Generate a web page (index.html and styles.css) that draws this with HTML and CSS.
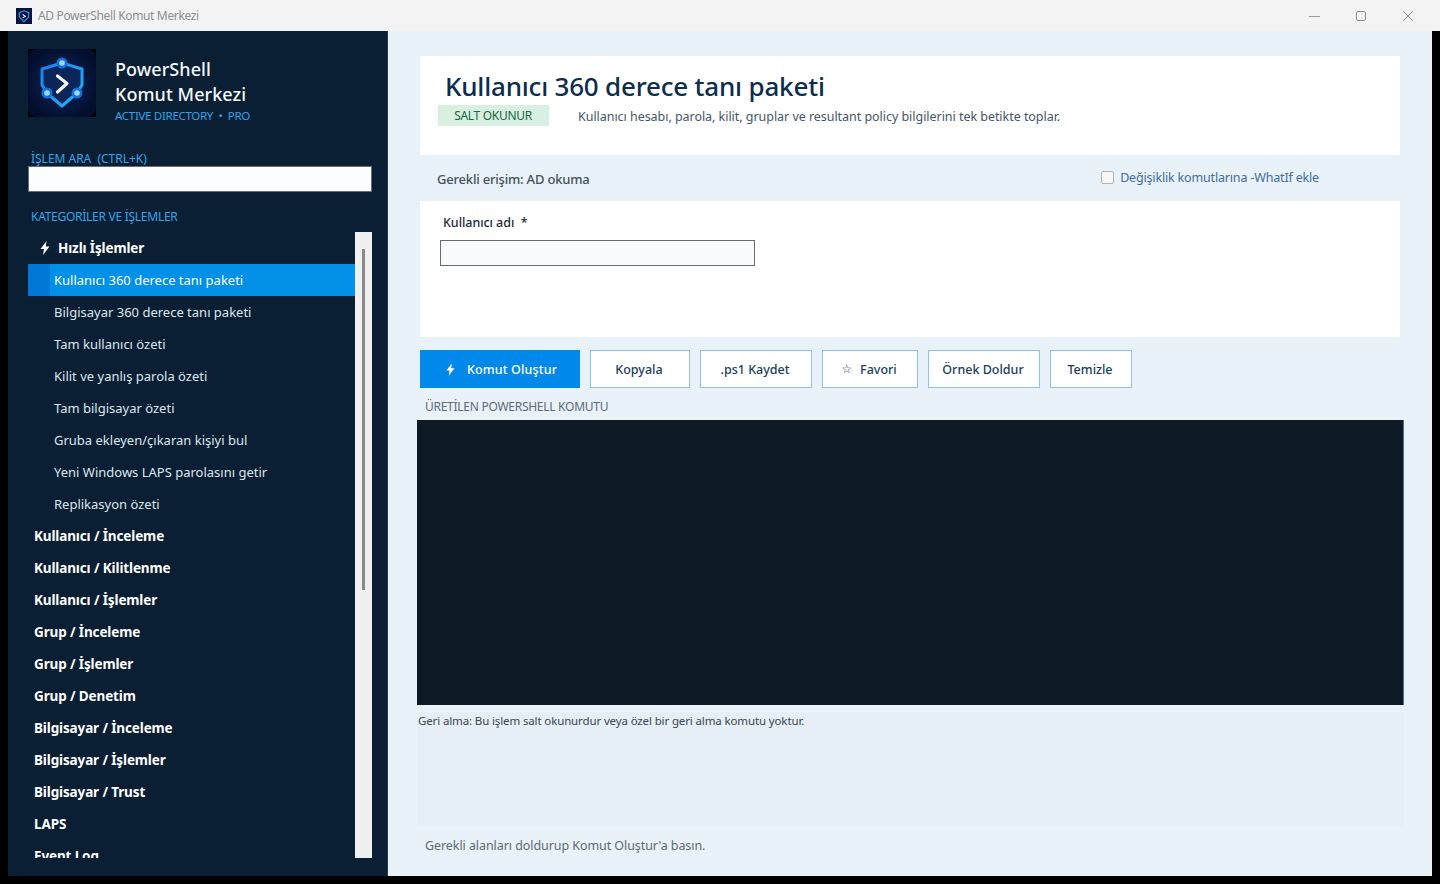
FILE: index.html
```html
<!DOCTYPE html>
<html lang="tr">
<head>
<meta charset="utf-8">
<title>AD PowerShell Komut Merkezi</title>
<link rel="stylesheet" href="styles.css">
</head>
<body>
<header class="titlebar">
  <svg class="app-icon" viewBox="0 0 68 68"><rect width="68" height="68" fill="#04143a"/><path d="M34 12 L54 20 V38 L34 58 L14 38 V20 Z" fill="none" stroke="#2f93f0" stroke-width="5"/><path d="M28 27 L39 35 L28 43" fill="none" stroke="#fff" stroke-width="5"/></svg>
  <span class="app-title">AD PowerShell Komut Merkezi</span>
  <div class="win-controls">
    <svg class="win-btn" viewBox="0 0 12 12"><path d="M1 6.5H12" stroke="#9a9a9a" fill="none"/></svg>
    <svg class="win-btn" viewBox="0 0 12 12"><rect x="1.5" y="1.5" width="9" height="9" rx="1.5" stroke="#8c8c8c" fill="none"/></svg>
    <svg class="win-btn" viewBox="0 0 12 12"><path d="M1 1L11 11M11 1L1 11" stroke="#8c8c8c" fill="none"/></svg>
  </div>
</header>
<div class="window">
  <aside class="sidebar">
    <div class="brand">
      <svg class="logo" viewBox="0 0 68 68">
        <defs>
          <radialGradient id="lg" cx="50%" cy="50%" r="55%"><stop offset="0" stop-color="#0c2c66"/><stop offset="1" stop-color="#030d2c"/></radialGradient>
          <linearGradient id="ls" x1="0" y1="0" x2="1" y2="1"><stop offset="0" stop-color="#1b7ff0"/><stop offset="1" stop-color="#25b4f5"/></linearGradient>
        </defs>
        <rect width="68" height="68" fill="#000"/>
        <rect width="68" height="68" rx="9" fill="url(#lg)"/>
        <path d="M34 14 L54 20 V36 L49 44 L34 57 L19 44 L14 36 V20 Z" fill="#0a2558" stroke="url(#ls)" stroke-width="3" stroke-linejoin="round"/>
        <path d="M29.5 27 L39 34.5 L29.5 43" fill="none" stroke="#f3f7fb" stroke-width="3.2" stroke-linecap="round" stroke-linejoin="round"/>
        <circle cx="34" cy="14" r="5.5" fill="#1670dc"/><circle cx="34" cy="14" r="2.8" fill="#9ad8ff"/>
        <circle cx="19" cy="44" r="5.5" fill="#1670dc"/><circle cx="19" cy="44" r="2.8" fill="#9ad8ff"/>
        <circle cx="49" cy="44" r="5.5" fill="#1670dc"/><circle cx="49" cy="44" r="2.8" fill="#9ad8ff"/>
      </svg>
      <div class="brand-text">
        <div class="brand-name">PowerShell<br>Komut Merkezi</div>
        <div class="brand-sub">ACTIVE DIRECTORY &nbsp;•&nbsp; PRO</div>
      </div>
    </div>
    <label class="side-label search-label" for="q">İŞLEM ARA&nbsp; (CTRL+K)</label>
    <input class="search" id="q" type="text">
    <div class="side-label cat-label">KATEGORİLER VE İŞLEMLER</div>
    <div class="tree">
      <ul class="tree-list">
        <li class="row head quick"><svg class="bolt" viewBox="0 0 10 14"><path d="M6.5 0 L0.5 8 H4 L3 14 L9.5 5.6 H5.8 Z" fill="#fff"/></svg>Hızlı İşlemler</li>
        <li class="row item selected"><span class="sel-strip"></span>Kullanıcı 360 derece tanı paketi</li>
        <li class="row item">Bilgisayar 360 derece tanı paketi</li>
        <li class="row item">Tam kullanıcı özeti</li>
        <li class="row item">Kilit ve yanlış parola özeti</li>
        <li class="row item">Tam bilgisayar özeti</li>
        <li class="row item">Gruba ekleyen/çıkaran kişiyi bul</li>
        <li class="row item">Yeni Windows LAPS parolasını getir</li>
        <li class="row item">Replikasyon özeti</li>
        <li class="row head">Kullanıcı / İnceleme</li>
        <li class="row head">Kullanıcı / Kilitlenme</li>
        <li class="row head">Kullanıcı / İşlemler</li>
        <li class="row head">Grup / İnceleme</li>
        <li class="row head">Grup / İşlemler</li>
        <li class="row head">Grup / Denetim</li>
        <li class="row head">Bilgisayar / İnceleme</li>
        <li class="row head">Bilgisayar / İşlemler</li>
        <li class="row head">Bilgisayar / Trust</li>
        <li class="row head">LAPS</li>
        <li class="row head">Event Log</li>
      </ul>
      <div class="scrollbar"><div class="thumb"></div></div>
    </div>
  </aside>
  <main class="main">
    <section class="card head-card">
      <h1 class="title">Kullanıcı 360 derece tanı paketi</h1>
      <div class="meta">
        <span class="badge">SALT OKUNUR</span>
        <span class="desc">Kullanıcı hesabı, parola, kilit, gruplar ve resultant policy bilgilerini tek betikte toplar.</span>
      </div>
    </section>
    <div class="access">
      <span class="access-text">Gerekli erişim: AD okuma</span>
      <label class="whatif"><span class="check"></span>Değişiklik komutlarına -WhatIf ekle</label>
    </div>
    <section class="card form-card">
      <label class="field-label" for="u">Kullanıcı adı &nbsp;*</label>
      <input class="field" id="u" type="text">
    </section>
    <div class="actions">
      <button class="btn primary w160"><svg class="bolt small" viewBox="0 0 10 14"><path d="M6.5 0 L0.5 8 H4 L3 14 L9.5 5.6 H5.8 Z" fill="#fff"/></svg>Komut Oluştur</button>
      <button class="btn w100">Kopyala</button>
      <button class="btn w112">.ps1 Kaydet</button>
      <button class="btn w96"><span class="star">☆</span>Favori</button>
      <button class="btn w112">Örnek Doldur</button>
      <button class="btn w82">Temizle</button>
    </div>
    <div class="out-label">ÜRETİLEN POWERSHELL KOMUTU</div>
    <div class="terminal"></div>
    <div class="note">Geri alma: Bu işlem salt okunurdur veya özel bir geri alma komutu yoktur.</div>
    <div class="status">Gerekli alanları doldurup Komut Oluştur'a basın.</div>
  </main>
</div>
</body>
</html>
```
FILE: styles.css
```css
* { box-sizing: border-box; }
html, body { margin: 0; height: 100%; overflow: hidden; }
body { background: #000; font-family: "Noto Sans", "Open Sans", sans-serif; font-size: 13px; display: flex; flex-direction: column; }
.titlebar { height: 31px; background: #f3f3f3; display: flex; align-items: center; padding-left: 16px; flex: none; }
.app-icon { width: 16px; height: 16px; margin-right: 6px; }
.app-title { color: #8e8e8e; font-size: 12px; letter-spacing: -0.35px; }
.win-controls { margin-left: auto; display: flex; gap: 35px; padding-right: 26px; }
.win-btn { width: 12px; height: 12px; display: block; }
.window { height: 845px; margin: 0 8px; display: flex; flex: none; }
.sidebar { width: 380px; background: #0a1f33; padding: 18px 16px 0 20px; display: flex; flex-direction: column; border-right: 1px solid #27394a; }
.brand { display: flex; align-items: flex-start; height: 68px; }
.logo { width: 68px; height: 68px; flex: none; }
.brand-text { margin-left: 19px; padding-top: 8px; }
.brand-name { color: #f5f8fb; font-size: 18px; line-height: 25px; font-weight: 500; letter-spacing: 0.05px; }
.brand-sub { color: #2ea3e6; font-size: 11.5px; line-height: 17px; letter-spacing: -0.3px; }
.side-label { color: #35a4e6; font-size: 12px; letter-spacing: -0.27px; display: block; margin-left: 3px; line-height: 16px; }
.search-label { margin-top: 34px; height: 15px; letter-spacing: -0.02px; }
.search { display: block; width: 344px; height: 26px; margin: 0; background: #fbfdff; border: 1px solid #6e6e6e; border-radius: 0; padding: 0; }
.cat-label { margin-top: 17px; }
.tree { margin-top: 7px; height: 626px; width: 344px; position: relative; overflow: hidden; }
.tree-list { list-style: none; margin: 0; padding: 0; width: 327px; }
.row { height: 32px; line-height: 32px; white-space: nowrap; position: relative; }
.head { color: #fff; font-weight: 700; font-size: 13.5px; padding-left: 6px; letter-spacing: -0.13px; }
.quick { padding-left: 30px; }
.item { color: #dbe6ef; font-size: 13px; padding-left: 26px; }
.selected { background: #0090e8; color: #fff; }
.sel-strip { position: absolute; left: 0; top: 0; width: 22px; height: 32px; background: #0078d7; }
.bolt { position: absolute; left: 12px; top: 9px; width: 10px; height: 14px; }
.scrollbar { position: absolute; right: 0; top: 0; width: 17px; height: 626px; background: #f0f0f0; }
.thumb { position: absolute; left: 7px; top: 17px; width: 3px; height: 341px; background: #8a8a8a; }
.main { flex: 1; background: #e9f1f9; padding: 25px 32px 0; display: flex; flex-direction: column; min-width: 0; }
.card { background: #fff; }
.head-card { height: 99px; padding: 13px 18px 0; }
.title { margin: 0 0 1px 7px; font-size: 26px; line-height: 35px; font-weight: 500; color: #0c2d4e; letter-spacing: -0.2px; }
.meta { display: flex; align-items: center; height: 21px; }
.badge { width: 111px; height: 21px; line-height: 21px; text-align: center; padding-right: 1px; background: #d8f0e2; color: #17693f; font-size: 12px; letter-spacing: -0.3px; }
.desc { margin-left: 29px; padding-top: 2px; color: #45566b; font-size: 12.5px; letter-spacing: -0.04px; }
.access { height: 46px; display: flex; align-items: center; padding: 2px 0 0 17px; }
.access-text { color: #45505c; font-size: 13px; font-weight: 500; letter-spacing: -0.2px; }
.whatif { margin-left: auto; margin-right: 81px; display: flex; align-items: center; color: #3f6ea3; font-size: 12.5px; letter-spacing: -0.17px; position: relative; top: -2px; }
.check { width: 13px; height: 13px; background: #f7f7f7; border: 1px solid #b4b4b4; border-radius: 2px; margin-right: 6px; }
.form-card { height: 136px; padding: 13px 20px 0; }
.field-label { display: block; color: #1c2b3a; font-size: 12.5px; font-weight: 500; line-height: 18px; margin-left: 3px; letter-spacing: -0.05px; }
.field { display: block; margin-top: 8px; width: 315px; height: 26px; background: #f8fcff; border: 1px solid #6b6b6b; border-radius: 0; padding: 0; }
.actions { display: flex; gap: 10px; margin-top: 13px; height: 38px; }
.btn { height: 38px; background: #fff; border: 1px solid #8ec2e8; color: #1c3d5c; font: 500 12.5px "Noto Sans", sans-serif; padding: 0 2px 0 0; display: flex; align-items: center; justify-content: center; }
.w160 { width: 160px; } .w100 { width: 100px; } .w112 { width: 112px; } .w96 { width: 96px; } .w82 { width: 82px; }
.primary { background: #0088ea; border-color: #0088ea; color: #fff; letter-spacing: 0.15px; padding: 0 0 0 3px; }
.bolt.small { position: static; width: 9px; height: 13px; margin-right: 12px; }
.star { font-family: "DejaVu Sans", sans-serif; font-size: 12px; margin-right: 8px; }
.out-label { margin: 11px 0 0 5px; height: 21px; line-height: 16px; color: #5e6b78; font-size: 12px; letter-spacing: -0.27px; }
.terminal { margin: 0 -4px 0 -3px; height: 285px; background: #0d1a26; border-right: 1px solid #5a6b7d; flex: none; }
.note { margin: 7px -4px 0 -3px; height: 115px; background: #e6eef6; color: #3a4754; font-size: 11.5px; letter-spacing: -0.13px; padding: 0 1px; line-height: 18px; flex: none; }
.status { margin: 10px 0 0 5px; color: #5f6b76; font-size: 12.5px; letter-spacing: -0.07px; line-height: 18px; }
```
